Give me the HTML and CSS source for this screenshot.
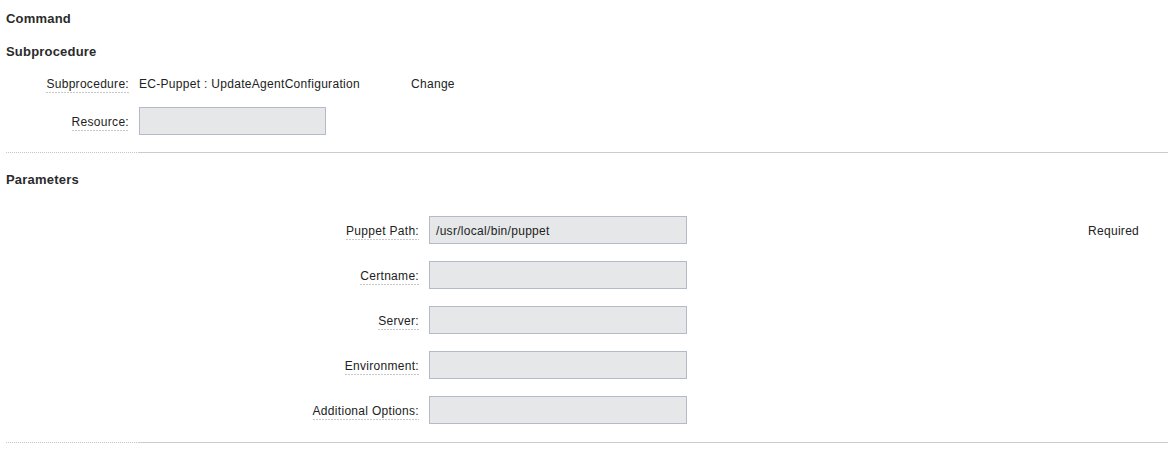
FILE: index.html
```html
<!DOCTYPE html>
<html>
<head>
<meta charset="utf-8">
<link rel="stylesheet" href="styles.css">
</head>
<body>
<div class="page">
  <div class="title title-command">Command</div>
  <div class="title title-sub">Subprocedure</div>
  <div class="sub-grid">
    <span class="lbl">Subprocedure:</span>
    <div class="sub-value">
      <span class="proc">EC-Puppet : UpdateAgentConfiguration</span>
      <span class="change">Change</span>
    </div>
    <span class="lbl">Resource:</span>
    <div><div class="field field-resource"></div></div>
  </div>
  <div class="sep sep-top"><div class="sep-dots"></div><div class="sep-line"></div></div>
  <div class="title title-params">Parameters</div>
  <div class="param-grid">
    <span class="lbl">Puppet Path:</span>
    <div class="field field-param">/usr/local/bin/puppet</div>
    <span class="req">Required</span>

    <span class="lbl">Certname:</span>
    <div class="field field-param"></div>
    <span></span>

    <span class="lbl">Server:</span>
    <div class="field field-param"></div>
    <span></span>

    <span class="lbl">Environment:</span>
    <div class="field field-param"></div>
    <span></span>

    <span class="lbl">Additional Options:</span>
    <div class="field field-param"></div>
    <span></span>
  </div>
  <div class="sep sep-bottom"><div class="sep-dots"></div><div class="sep-line"></div></div>
</div>
</body>
</html>
```
FILE: styles.css
```css
html, body {
  margin: 0;
  padding: 0;
  background: #fff;
}
body {
  font-family: "Liberation Sans", Arial, sans-serif;
  font-size: 12px;
  letter-spacing: 0.3px;
  color: #222;
}
.page {
  width: 1168px;
}
.title {
  font-weight: bold;
  font-size: 13px;
  letter-spacing: 0.2px;
  line-height: 14px;
  height: 13px;
  padding-top: 1px;
  color: #2b2b2b;
  padding-left: 6px;
}
.title-command { margin-top: 11px; }
.title-sub { margin-top: 19px; }
.title-params { margin-top: 19px; }

.lbl {
  justify-self: end;
  line-height: 14px;
  padding-bottom: 2px;
  margin-top: 4px;
  background: linear-gradient(to right, #c8c8c8 2px, transparent 2px) repeat-x left bottom / 3px 1px;
}

.sub-grid {
  display: grid;
  grid-template-columns: 123px 1fr;
  grid-auto-rows: 28px;
  column-gap: 10px;
  row-gap: 10px;
  align-items: center;
  margin-top: 11px;
  padding-left: 6px;
}
.sub-value {
  display: flex;
  align-items: center;
  line-height: 14px;
  padding-top: 2px;
}
.proc {
  width: 272px;
}
.field {
  box-sizing: border-box;
  height: 28px;
  background: #e6e7e9;
  border: 1px solid #b4bac7;
  line-height: 27px;
  padding-top: 1px;
  padding-left: 6px;
  color: #222;
}
.field-resource { width: 187px; }
.field-param { width: 258px; }

.sep {
  display: flex;
  height: 1px;
  padding-left: 6px;
}
.sep-dots {
  width: 132px;
  background: linear-gradient(to right, #c4c4c4 1px, transparent 1px) repeat-x left top / 2px 1px;
}
.sep-line {
  flex: 1;
  background: #cbcbcb;
}
.sep-top { margin-top: 17px; }
.sep-bottom { margin-top: 18px; }

.param-grid {
  display: grid;
  grid-template-columns: 413px 258px 1fr;
  grid-auto-rows: 28px;
  column-gap: 10px;
  row-gap: 17px;
  align-items: center;
  margin-top: 30px;
  padding-left: 6px;
}
.req {
  margin-left: 391px;
  line-height: 14px;
  padding-top: 2px;
}
```
